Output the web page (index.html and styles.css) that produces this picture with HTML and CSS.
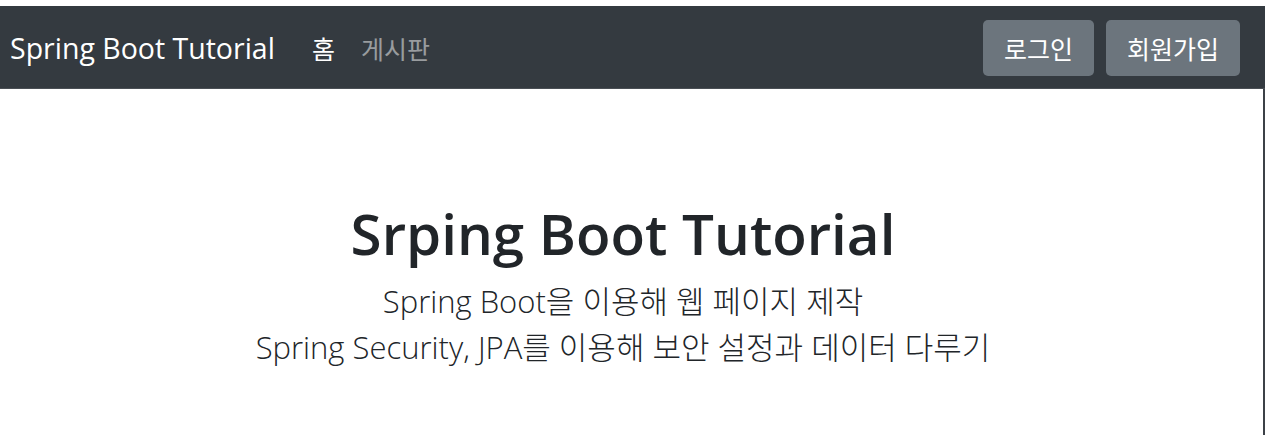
FILE: index.html
```html
<!DOCTYPE html>
<html lang="ko">
<head>
<meta charset="utf-8">
<title>Spring Boot Tutorial</title>
<link rel="stylesheet" href="styles.css">
</head>
<body>
<div class="page">
  <nav class="navbar">
    <div class="nav-left">
      <a class="brand" href="#">Spring Boot Tutorial</a>
      <ul class="nav-links">
        <li><a class="nav-link active" href="#">홈</a></li>
        <li><a class="nav-link" href="#">게시판</a></li>
      </ul>
    </div>
    <div class="nav-right">
      <a class="btn" href="#">로그인</a>
      <a class="btn" href="#">회원가입</a>
    </div>
  </nav>
  <main class="main">
    <section class="hero">
      <h1 class="hero-title">Srping Boot Tutorial</h1>
      <p class="lead">Spring Boot을 이용해 웹 페이지 제작</p>
      <p class="lead">Spring Security, JPA를 이용해 보안 설정과 데이터 다루기</p>
    </section>
  </main>
</div>
</body>
</html>
```
FILE: styles.css
```css
* { box-sizing: border-box; }
html, body {
  margin: 0;
  padding: 0;
  background: #ffffff;
}
body {
  font-family: "Open Sans", "Noto Sans CJK KR", sans-serif;
  color: #212529;
  padding-top: 6px;
  height: 435px;
  overflow: hidden;
}
.page {
  display: flex;
  flex-direction: column;
  height: 100%;
}
.navbar {
  height: 83px;
  background: #343a40;
  border-bottom: 1px solid #4a4f55;
  display: flex;
  align-items: center;
  justify-content: space-between;
  padding: 2px 25px 0 10px;
}
.nav-left {
  display: flex;
  align-items: center;
}
.brand {
  color: #ffffff;
  text-decoration: none;
  font-size: 28.5px;
  margin-right: 24px;
}
.nav-links {
  list-style: none;
  display: flex;
  margin: 0;
  padding: 0;
}
.nav-link {
  display: block;
  padding: 0 13px;
  font-size: 25px;
  color: rgba(255, 255, 255, 0.5);
  text-decoration: none;
  font-family: "Noto Sans CJK KR", sans-serif;
}
.nav-link.active {
  color: #ffffff;
}
.nav-right {
  display: flex;
  gap: 12px;
}
.btn {
  display: flex;
  align-items: center;
  height: 56px;
  padding: 0 21px;
  background: #6c757d;
  color: #ffffff;
  border-radius: 5px;
  text-decoration: none;
  font-size: 25px;
  font-family: "Noto Sans CJK KR", sans-serif;
}
.main {
  flex: 1;
  border-right: 2px solid #3c4147;
  padding-right: 17px;
}
.hero {
  text-align: center;
  padding-top: 111px;
}
.hero-title {
  margin: 0 0 10px;
  font-size: 56.5px;
  font-weight: 600;
  line-height: 1.2;
}
.lead {
  margin: 0;
  font-size: 31px;
  font-weight: 300;
  line-height: 46px;
}
```
